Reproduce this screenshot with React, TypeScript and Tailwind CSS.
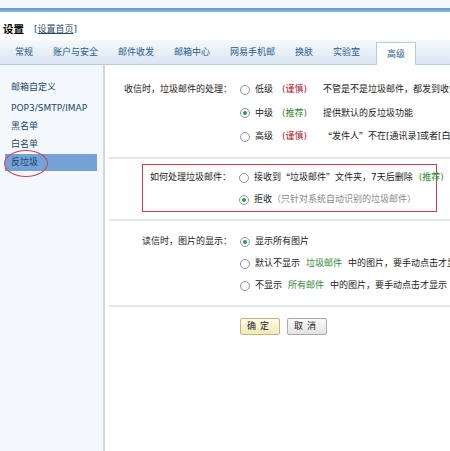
const tabs = ["常规", "账户与安全", "邮件收发", "邮箱中心", "网易手机邮", "换肤", "实验室"];

const sideItems = ["邮箱自定义", "POP3/SMTP/IMAP", "黑名单", "白名单"];

function Radio({ checked = false }: { checked?: boolean }) {
  return (
    <span className="flex h-[10px] w-[10px] shrink-0 items-center justify-center rounded-full border border-[#8596a6] bg-white">
      {checked && <span className="h-[4px] w-[4px] rounded-full bg-[#2f9a45]" />}
    </span>
  );
}

function Row({
  label,
  labelWidth,
  checked,
  children,
  h = "h-[22px]",
}: {
  label?: string;
  labelWidth: string;
  checked?: boolean;
  children: React.ReactNode;
  h?: string;
}) {
  return (
    <div className={`flex items-center whitespace-nowrap ${h}`}>
      <div className={`${labelWidth} shrink-0 text-right text-[#222]`}>{label}</div>
      <div className="ml-[8px]">
        <Radio checked={checked} />
      </div>
      <div className="ml-[5px] flex shrink-0 items-center text-[#222]">{children}</div>
    </div>
  );
}

function Level({ name, tag, good }: { name: string; tag: string; good?: boolean }) {
  return (
    <span className="inline-block w-[68px] shrink-0">
      {name}
      <span className={`ml-[9px] ${good ? "text-[#2f8a2f]" : "text-[#b3101e]"}`}>({tag})</span>
    </span>
  );
}

// fullwidth CJK quote marks
function Q({ children }: { children: React.ReactNode }) {
  return <span className="font-['Noto_Sans_CJK_SC']">{children}</span>;
}

export default function App() {
  return (
    <div
      className="flex h-[451px] w-[450px] flex-col overflow-hidden bg-white text-[9px] leading-none"
      style={{ fontFamily: '"DejaVu Sans", "Noto Sans CJK SC", sans-serif' }}
    >
      <div className="h-[8px] bg-[#f4f7fa]" />
      <div className="h-[4px] bg-gradient-to-b from-[#5b97d2] to-[#8ab8e4]" />

      <div className="flex h-[28px] items-center px-[3px] pt-[6px]">
        <span className="text-[10.5px] font-bold text-black">设置</span>
        <span className="ml-[10px] text-[#1f4a72]">
          [<span className="underline">设置首页</span>]
        </span>
      </div>

      <div className="flex h-[25px] items-end border-b border-[#b6cbdf] bg-gradient-to-b from-[#f5f9fc] to-[#d9e6f2] pl-[5px]">
        {tabs.map((t) => (
          <div key={t} className="flex h-[23px] items-center px-[10px] text-[#2b5c8a]">
            {t}
          </div>
        ))}
        <div className="-mb-px ml-[6px] flex h-[23px] items-center border border-b-0 border-[#b6cbdf] bg-white px-[10px] text-[#2b5c8a]">
          高级
        </div>
      </div>

      <div className="flex min-h-0 flex-1">
        <div className="w-[105px] shrink-0 border-r-2 border-[#d3d8dc] bg-[#f4f8fb] pt-[13px]">
          {sideItems.map((s, i) => (
            <div
              key={s}
              className={`flex h-[18px] items-center px-[11px] text-[#21486b] ${i === 0 ? "mb-[3px]" : ""}`}
            >
              {s}
            </div>
          ))}
          <div className="relative ml-[5px] mr-[6px] mt-[1px] flex h-[17px] items-center bg-[#74a2d6] px-[6px] text-[#1f3f60]">
            反垃圾
            <span className="absolute left-[-1px] top-[-4px] h-[27px] w-[44px] rounded-[50%] border-[1.5px] border-[#c8455f]" />
          </div>
        </div>

        <div className="flex min-w-0 flex-1 flex-col overflow-hidden">
          <div className="pb-[8px] pt-[13px]">
            <Row label="收信时，垃圾邮件的处理：" labelWidth="w-[127px]" h="h-[23.5px]">
              <Level name="低级" tag="谨慎" />
              不管是不是垃圾邮件，都发到收件箱
            </Row>
            <Row label="" labelWidth="w-[127px]" checked h="h-[23.5px]">
              <Level name="中级" tag="推荐" good />
              提供默认的反垃圾功能
            </Row>
            <Row label="" labelWidth="w-[127px]" h="h-[23.5px]">
              <Level name="高级" tag="谨慎" />
              <Q>“</Q>发件人<Q>”</Q>不在[通讯录]或者[白名单]中的邮件
            </Row>
          </div>
          <div className="ml-[4px] h-[2px] bg-[#dfe5ea]" />

          <div className="ml-[37px] mr-[13px] mt-[5px] border border-[#c4404f] pt-[2px]">
            <Row label="如何处理垃圾邮件：" labelWidth="w-[88px]">
              接收到<Q>“</Q>垃圾邮件<Q>”</Q>文件夹，7天后删除
              <span className="ml-[6px] text-[#2f8a2f]">(推荐)</span>
            </Row>
            <Row label="" labelWidth="w-[88px]" checked>
              拒收
              <span className="text-[#888]">（只针对系统自动识别的垃圾邮件）</span>
            </Row>
          </div>
          <div className="ml-[4px] mt-[7px] h-[2px] bg-[#dfe5ea]" />

          <div className="pb-[8px] pt-[10px]">
            <Row label="读信时，图片的显示：" labelWidth="w-[127px]" checked>
              显示所有图片
            </Row>
            <Row label="" labelWidth="w-[127px]">
              默认不显示
              <span className="mx-[6px] text-[#2f8a2f]">垃圾邮件</span>
              中的图片，要手动点击才显示
            </Row>
            <Row label="" labelWidth="w-[127px]">
              不显示
              <span className="mx-[6px] text-[#2f8a2f]">所有邮件</span>
              中的图片，要手动点击才显示
            </Row>
          </div>
          <div className="ml-[4px] h-[2px] bg-[#dfe5ea]" />

          <div className="ml-[135px] mt-[11px] flex gap-[7px]">
            <button className="flex h-[17px] w-[40px] items-center justify-center rounded-[2px] border border-[#c7b57c] bg-gradient-to-b from-[#fffbe8] to-[#f2e8b9] tracking-[4px] text-[#222]">
              确定
            </button>
            <button className="flex h-[17px] w-[40px] items-center justify-center rounded-[2px] border border-[#a9a9a9] bg-gradient-to-b from-[#fafafa] to-[#e4e4e4] tracking-[4px] text-[#222]">
              取消
            </button>
          </div>
        </div>
      </div>
    </div>
  );
}
